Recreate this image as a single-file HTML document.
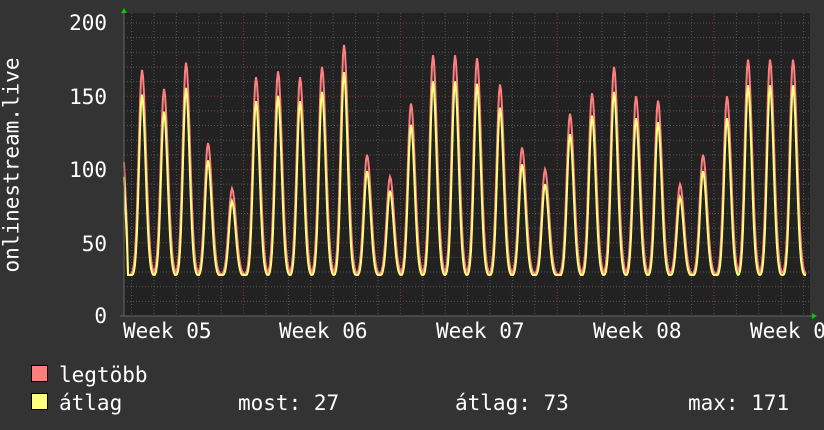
<!DOCTYPE html>
<html><head><meta charset="utf-8"><style>
body{margin:0;background:#333;width:824px;height:430px;overflow:hidden;position:relative;font-family:"DejaVu Sans Mono","Liberation Mono",monospace;color:#fff}
.t{position:absolute;font-size:21px;line-height:24px;white-space:pre}
.box{position:absolute;width:15px;height:15px;border:1px solid #000}
</style></head><body>
<svg id="g" width="824" height="430" style="position:absolute;left:0;top:0"></svg>
<div class="t" style="right:717px;top:11px">200</div>
<div class="t" style="right:717px;top:85px">150</div>
<div class="t" style="right:717px;top:158px">100</div>
<div class="t" style="right:717px;top:232px">50</div>
<div class="t" style="right:717px;top:304px">0</div>
<div class="t" style="left:-96px;top:153px;transform:rotate(-90deg)">onlinestream.live</div>
<div class="t" style="left:123px;top:319px">Week 05</div>
<div class="t" style="left:279px;top:319px">Week 06</div>
<div class="t" style="left:436px;top:319px">Week 07</div>
<div class="t" style="left:593px;top:319px">Week 08</div>
<div class="t" style="left:750px;top:319px">Week 09</div>
<div class="box" style="left:31px;top:365px;background:#ff7f7f"></div>
<div class="box" style="left:31px;top:393px;background:#ffff7f"></div>
<div class="t" style="left:59px;top:363px">legtöbb</div>
<div class="t" style="left:59px;top:391px">átlag</div>
<div class="t" style="left:238px;top:391px">most: 27</div>
<div class="t" style="left:455px;top:391px">átlag: 73</div>
<div class="t" style="left:688px;top:391px">max: 171</div>
<script>
var s='',X0=124,X1=810,T=13,B=316;
function y(v){return 316-v*1.465;}
s+='<rect x="'+X0+'" y="'+T+'" width="'+(X1-X0)+'" height="'+(B-T)+'" fill="#222"/>';
for(var v=10;v<=200;v+=10){var yy=y(v);var maj=v%50==0;s+='<line x1="'+X0+'" x2="'+X1+'" y1="'+yy+'" y2="'+yy+'" stroke="'+(maj?'#7a3a3a':'#555')+'" stroke-dasharray="1,2"/>';}
for(var x=131.6;x<X1;x+=22.4){var maj=Math.abs(((x-243.6)/156.8)-Math.round((x-243.6)/156.8))<0.02;s+='<line x1="'+x+'" x2="'+x+'" y1="'+T+'" y2="'+B+'" stroke="'+(maj?'#7a3a3a':'#555')+'" stroke-dasharray="1,2"/>';}
var pk=[[142,168],[164,155],[186,173],[208,118],[232,87],[256,163],[278,167],[300,163],[322,170],[344,185],[367,110],[390,95],[411,145],[433,178],[455,178],[477,176],[500,158],[522,115],[545,100],[570,138],[592,152],[614,170],[636,150],[658,147],[680,90],[703,110],[727,150],[748,175],[770,175],[793,175]];
var r='',a='';
for(var x=X0;x<=806;x++){var v=28,w=28;
 if(x<128){v=105-(x-124)*15;w=v-10;}
 for(var i=0;i<pk.length;i++){var d=x-pk[i][0];var g=Math.exp(-d*d/(d<0?22:32));var m=28+(pk[i][1]-28)*g;var m2=27+(pk[i][1]*0.9-27)*Math.exp(-d*d/(d<0?18:26));if(m>v)v=m;if(m2>w)w=m2;}
 r+=(x==X0?'M':'L')+x+' '+y(v).toFixed(1);a+=(x==X0?'M':'L')+x+' '+y(w).toFixed(1);}
s+='<path d="'+r+'" fill="none" stroke="#ff7f7f" stroke-width="2"/>';
s+='<path d="'+a+'" fill="none" stroke="#ffff7f" stroke-width="2"/>';
s+='<line x1="'+X0+'" x2="'+X0+'" y1="13" y2="'+B+'" stroke="#666"/><line x1="'+(X0-4)+'" x2="814" y1="'+B+'" y2="'+B+'" stroke="#666"/>';
s+='<polygon points="121,13 127,13 124,8" fill="#0c0"/><polygon points="812,313 812,319 817,316" fill="#0c0"/>';
document.getElementById('g').innerHTML=s;
</script>
</body></html>
